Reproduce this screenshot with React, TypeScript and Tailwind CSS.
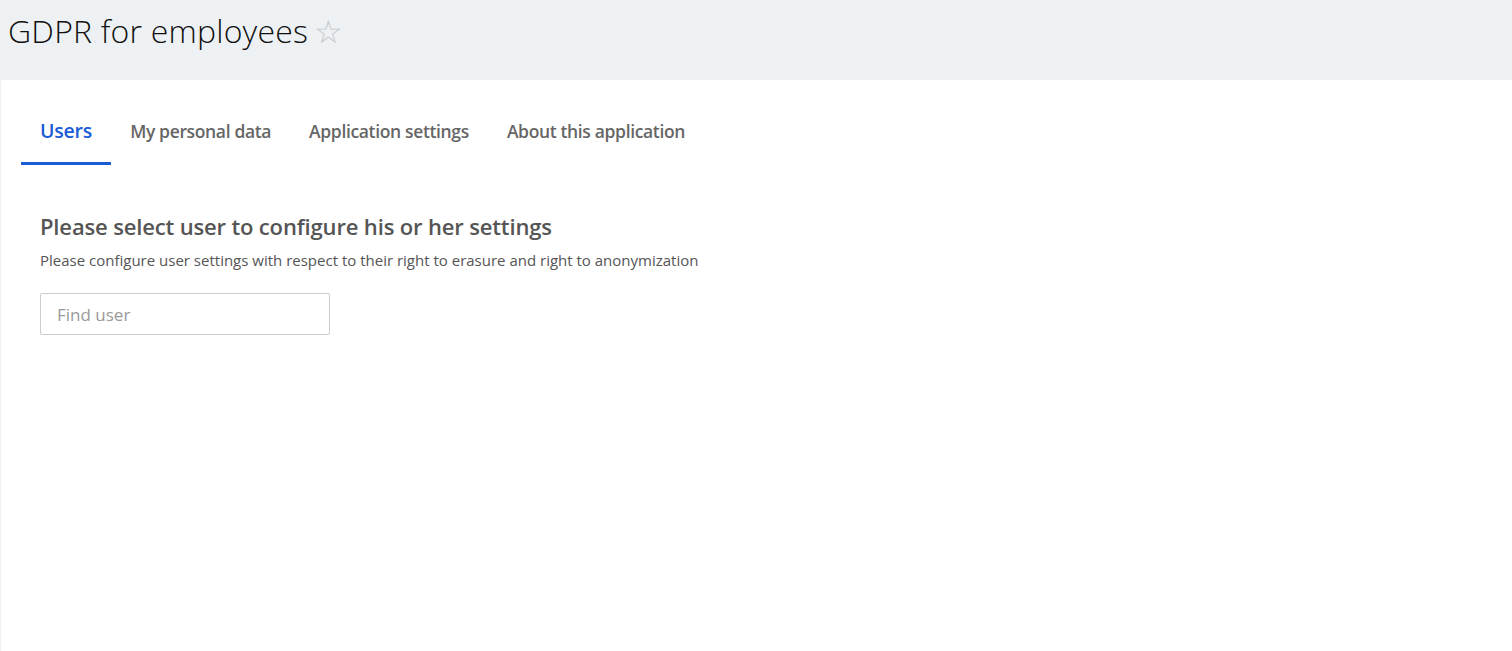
import { useState } from "react";

const tabs = ["Users", "My personal data", "Application settings", "About this application"];

export default function App() {
  const [active, setActive] = useState("Users");
  const [query, setQuery] = useState("");

  return (
    <div className="min-h-screen bg-[#eef1f4] font-['Open_Sans',sans-serif]">
      <header className="h-20 px-2 pt-[9px]">
        <h1 className="flex items-center text-[32px] font-light leading-[44px] text-[#111]">
          <span className="tracking-[0.2px]">GDPR for employees</span>
          <span className="ml-1.5 text-[32px] leading-none text-[#c4c7ca]">☆</span>
        </h1>
      </header>

      <main className="ml-px min-h-[571px] bg-white px-5 pt-[30px]">
        {/* Tabs */}
        <nav className="flex items-end">
          {tabs.map((t) =>
            t === active ? (
              <button
                key={t}
                onClick={() => setActive(t)}
                className="h-[55px] border-b-[3px] border-[#1a5bd6] px-[19px] pb-[10px] text-[19.5px] font-semibold leading-[28px] tracking-[-0.2px] text-[#1a5bd6]"
              >
                {t}
              </button>
            ) : (
              <button
                key={t}
                onClick={() => setActive(t)}
                className="h-[55px] border-b-[3px] border-transparent px-[19px] pb-[11px] text-[17.5px] font-semibold leading-[26px] tracking-[-0.35px] text-[#666]"
              >
                {t}
              </button>
            )
          )}
        </nav>

        <section className="px-[19px] pt-[46px]">
          <h2 className="text-[22px] font-semibold leading-[30px] tracking-[-0.15px] text-[#555]">
            Please select user to configure his or her settings
          </h2>
          <p className="mt-[9px] text-[15px] leading-[20px] text-[#555]">
            Please configure user settings with respect to their right to erasure and right to anonymization
          </p>
          <input
            value={query}
            onChange={(e) => setQuery(e.target.value)}
            placeholder="Find user"
            className="mt-[23px] h-[42px] w-[290px] rounded-[2px] border border-[#ccc] px-4 text-[17px] text-[#333] outline-none placeholder:text-[#999]"
          />
        </section>
      </main>
    </div>
  );
}
